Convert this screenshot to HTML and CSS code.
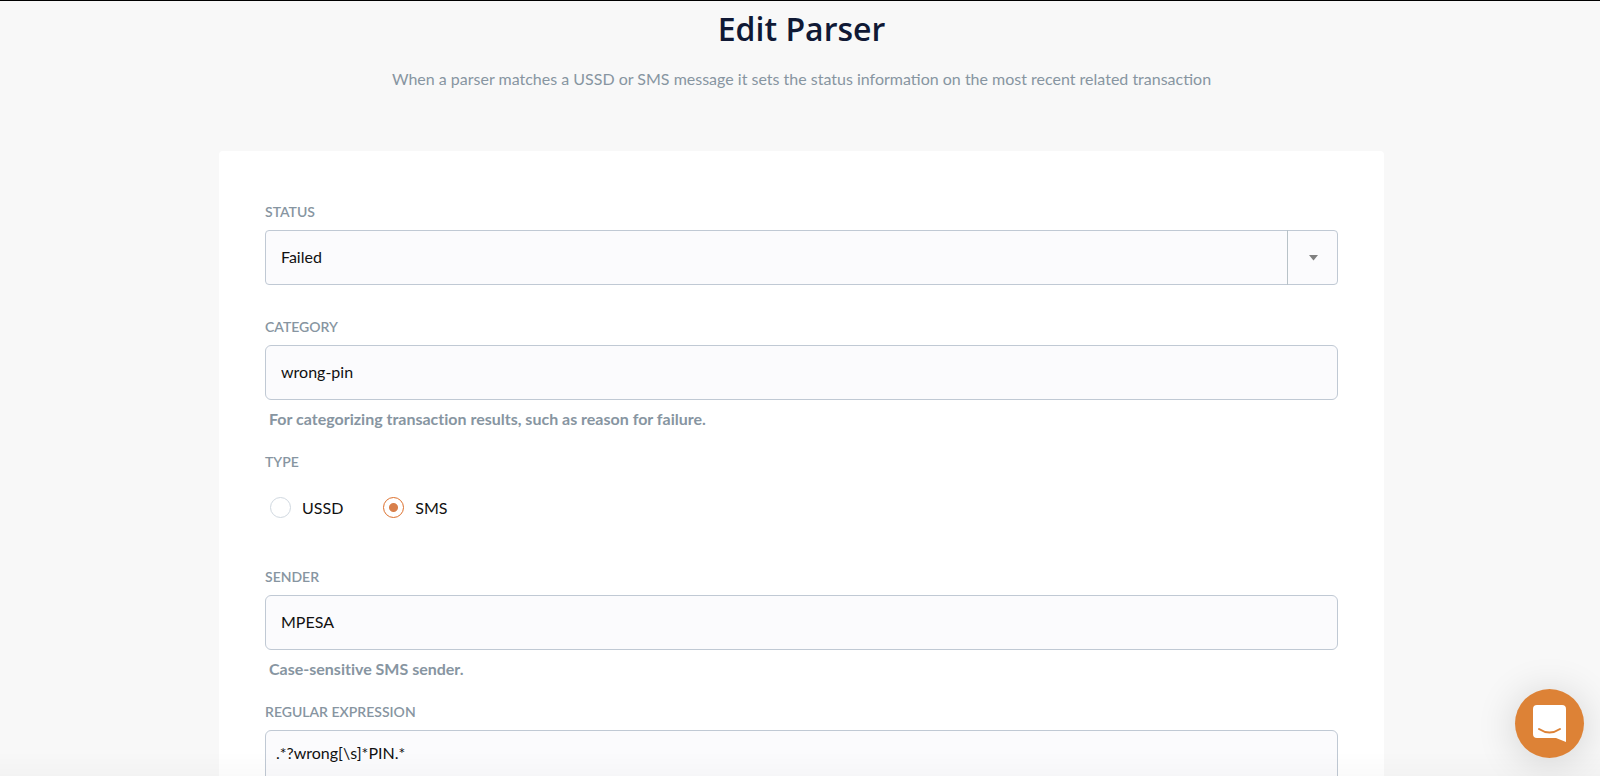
FILE: index.html
```html
<!DOCTYPE html>
<html lang="en">
<head>
<meta charset="utf-8">
<meta name="viewport" content="width=device-width, initial-scale=1">
<title>Edit Parser</title>
<link rel="stylesheet" href="styles.css">
</head>
<body>
<main class="page">
  <header class="page-header">
    <h1 class="title">Edit Parser</h1>
    <p class="subtitle">When a parser matches a USSD or SMS message it sets the status information on the most recent related transaction</p>
  </header>
  <form class="card">
    <div class="field">
      <label class="label" for="status">STATUS</label>
      <div class="select-wrap">
        <select class="control select" id="status"><option>Failed</option></select>
        <span class="select-arrow"><svg width="9" height="6" viewBox="0 0 9 6"><path d="M0 0h9L4.5 5.5z" fill="#808080"/></svg></span>
      </div>
    </div>
    <div class="field">
      <label class="label" for="category">CATEGORY</label>
      <input class="control" id="category" type="text" value="wrong-pin">
      <p class="hint">For categorizing transaction results, such as reason for failure.</p>
    </div>
    <fieldset class="field radios">
      <legend class="label">TYPE</legend>
      <div class="radio-row">
        <label class="radio"><input class="radio-input" type="radio" name="type">USSD</label>
        <label class="radio"><input class="radio-input" type="radio" name="type" checked>SMS</label>
      </div>
    </fieldset>
    <div class="field">
      <label class="label" for="sender">SENDER</label>
      <input class="control" id="sender" type="text" value="MPESA">
      <p class="hint">Case-sensitive SMS sender.</p>
    </div>
    <div class="field">
      <label class="label" for="regex">REGULAR EXPRESSION</label>
      <textarea class="control area" id="regex">.*?wrong[\s]*PIN.*</textarea>
    </div>
  </form>
</main>
<button class="chat" type="button" aria-label="Open chat">
  <svg width="34" height="38" viewBox="0 0 34 38"><path d="M4 0h25q4 0 4 4v33l-10-4H4q-4 0-4-4V4q0-4 4-4z" fill="#fff"/><path d="M6 24q10.500 7 21 0" fill="none" stroke="#dd8236" stroke-width="2" stroke-linecap="round"/></svg>
</button>
</body>
</html>
```

FILE: styles.css
```css
* { box-sizing: border-box; }

body {
  margin: 0;
  background: #f8f8f8;
  color: #111;
  font-family: Lato, "Liberation Sans", sans-serif;
  font-size: 16px;
  line-height: 20px;
}

.page {
  height: 100vh;
  overflow: hidden;
  border-top: 1px solid #000;
  padding-left: 3px;
}

.page::after {
  content: "";
  position: fixed;
  inset: auto 0 0;
  height: 24px;
  background: linear-gradient(transparent, rgba(0, 0, 0, 0.02));
  pointer-events: none;
}

.page-header { text-align: center; }

.title {
  margin: 0;
  padding-top: 8px;
  color: #101935;
  font-family: "Open Sans", "Noto Sans", sans-serif;
  font-size: 32px;
  font-weight: 600;
  line-height: 40px;
}

.subtitle {
  margin: 20px 0 0;
  color: #8795a1;
}

.card {
  max-width: 1165px;
  margin: 62px auto 0;
  padding: 51px 46px;
  background: #fff;
  border-radius: 4px;
}

.field {
  margin: 0 0 32px;
  padding: 0;
  border: 0;
}

.field:has(.hint) { margin-bottom: 23px; }

.label {
  display: block;
  padding: 0;
  margin-bottom: 8px;
  color: #8795a1;
  font-size: 14px;
  font-weight: 600;
  line-height: 20px;
}

.control {
  display: block;
  width: 100%;
  height: 55px;
  padding: 0 15px 2px;
  border: 1px solid #c0c9d4;
  border-radius: 6px;
  background: #fbfbfd;
  color: #111;
  font: inherit;
}

.select-wrap {
  display: grid;
  grid-template-columns: 1fr 51px;
}

.select {
  grid-area: 1 / 1 / 2 / 3;
  appearance: none;
  border-radius: 4px;
}

.select-arrow {
  grid-area: 1 / 2;
  display: flex;
  align-items: center;
  justify-content: center;
  border-left: 1px solid #b8c2c8;
  pointer-events: none;
  z-index: 1;
}

.hint {
  margin: 9px 0 0 4px;
  color: #8795a1;
  font-weight: 700;
  font-variant-ligatures: none;
}

.radio-row {
  display: flex;
  gap: 40px;
  padding: 17px 5px;
}

.radio {
  display: flex;
  align-items: center;
  gap: 11px;
}

.radio-input {
  appearance: none;
  width: 21px;
  height: 21px;
  margin: 0;
  border: 1px solid #d0d8e0;
  border-radius: 50%;
  background: #fff;
}

.radio-input:checked {
  border-color: #dc6f2c;
  background: radial-gradient(circle, #d8804c 4px, #fff 5px);
}

.area {
  height: 120px;
  padding: 12px 10px;
  resize: none;
}

.chat {
  position: fixed;
  right: 16px;
  bottom: 18px;
  display: flex;
  align-items: center;
  justify-content: center;
  width: 69px;
  height: 69px;
  padding: 0;
  border: 0;
  border-radius: 50%;
  background: #dd8236;
  box-shadow: 0 4px 40px rgba(0, 0, 0, 0.16);
}
```
